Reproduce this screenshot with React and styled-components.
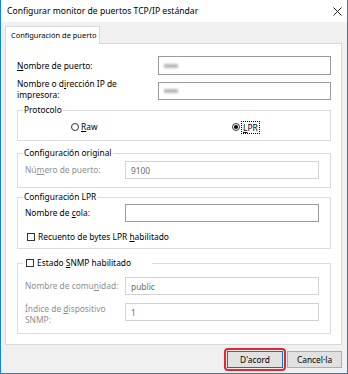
import React from 'react';
import styled, { createGlobalStyle } from 'styled-components';

const Global = createGlobalStyle`
  html, body { margin: 0; padding: 0; background: #fff; }
  body {
    font-family: "Noto Sans", "Liberation Sans", sans-serif;
    font-size: 8.4px;
    color: #000;
  }
  * { box-sizing: border-box; }
`;

const Window = styled.div`
  width: 348px;
  height: 374px;
  border: 1px solid #1883d7;
  border-top: none;
  display: flex;
  flex-direction: column;
  background: #f0f0f0;
`;

const TitleBar = styled.div`
  height: 22px;
  flex: none;
  background: #fff;
  display: flex;
  align-items: center;
  justify-content: space-between;
  padding: 0 5px 0 6px;
  font-size: 8.6px;
`;

const Body = styled.div`
  flex: 1;
  display: flex;
  flex-direction: column;
  padding: 4px 5px 0 4px;
`;

const TabStrip = styled.div`
  display: flex;
  height: 18px;
  margin-bottom: -1px;
  position: relative;
  z-index: 1;
`;

const Tab = styled.div`
  background: #fff;
  border: 1px solid #d9d9d9;
  border-bottom: none;
  padding: 0 3px 0 5px;
  line-height: 16px;
  width: 95px;
  font-size: 7.45px;
  white-space: nowrap;
`;

const Panel = styled.div`
  flex: 1;
  background: #fff;
  border: 1px solid #d9d9d9;
  padding: 12px 10px 0 11px;
  display: flex;
  flex-direction: column;
`;

const Row = styled.div`
  display: flex;
  align-items: ${p => p.$align || 'center'};
  margin-top: ${p => p.$mt || 0}px;
`;

const Label = styled.div`
  width: ${p => p.$w}px;
  flex: none;
  line-height: ${p => p.$lh || 12}px;
  color: ${p => (p.$disabled ? '#8f8f8f' : '#000')};
  white-space: pre-line;
`;

const Input = styled.div`
  flex: none;
  width: ${p => p.$w}px;
  height: ${p => p.$h || 18}px;
  border: 1px solid ${p => (p.$disabled ? '#d2d2d2' : '#9a9a9a')};
  background: #fff;
  display: flex;
  align-items: center;
  padding-left: 5px;
  color: #6d6d6d;
`;

const Blur = styled.span`
  display: inline-block;
  width: 14px;
  height: 4px;
  background: #b8b8b8;
  filter: blur(1px);
`;

const Group = styled.fieldset`
  margin: ${p => p.$mt}px 0 0 0;
  border: 1px solid #dcdcdc;
  padding: ${p => p.$pt}px 11px ${p => p.$pb}px 7px;
  min-width: 0;
`;

const Legend = styled.legend`
  padding: 0 1px;
  margin-left: -2px;
  line-height: 12px;
  width: ${p => (p.$w ? `${p.$w}px` : 'auto')};
  display: ${p => (p.$w ? 'flex' : 'block')};
  align-items: center;
`;

const RadioRow = styled.div`
  display: grid;
  grid-template-columns: 161px auto;
  padding-left: 46px;
  line-height: 12px;
`;

const Choice = styled.label`
  display: flex;
  align-items: center;
  gap: ${p => p.$gap ?? 2}px;
  line-height: 12px;
`;

const RadioCircle = styled.span`
  width: 8px;
  height: 8px;
  border-radius: 50%;
  border: 1px solid #333;
  background: #fff;
  display: flex;
  align-items: center;
  justify-content: center;
  &::after {
    content: '';
    display: ${p => (p.$checked ? 'block' : 'none')};
    width: 4px;
    height: 4px;
    border-radius: 50%;
    background: #000;
  }
`;

const Box = styled.span`
  width: 8px;
  height: 8px;
  flex: none;
  border: 1px solid #333;
  background: #fff;
  margin-left: 2px;
`;

const Focus = styled.span`
  outline: 1px dotted #000;
  outline-offset: 0;
  padding: 0 1px;
  line-height: 11px;
`;

const U = styled.span`
  text-decoration: underline;
  text-underline-offset: 1px;
`;

const Footer = styled.div`
  flex: none;
  height: 28px;
  display: flex;
  justify-content: flex-end;
  align-items: center;
  padding: 3px 0 2px;
  gap: 1px;
`;

const Highlight = styled.span`
  display: inline-flex;
  border: 2px solid #e5262b;
  border-radius: 4px;
  padding: 1px;
`;

const Button = styled.button`
  font: inherit;
  height: 17px;
  width: ${p => p.$w}px;
  padding: 0;
  background: #e1e1e1;
  border: 1px solid ${p => (p.$default ? '#0078d7' : '#adadad')};
  color: #000;
  display: flex;
  align-items: center;
  justify-content: center;
`;

const CloseIcon = () => (
  <svg width="9" height="9" viewBox="0 0 9 9">
    <path d="M0.5 0.5 L8.5 8.5 M8.5 0.5 L0.5 8.5" stroke="#222" strokeWidth="1" />
  </svg>
);

export default function App() {
  return (
    <>
      <Global />
      <Window>
        <TitleBar>
          <span>Configurar monitor de puertos TCP/IP estándar</span>
          <CloseIcon />
        </TitleBar>
        <Body>
          <TabStrip>
            <Tab>Configuración de puerto</Tab>
          </TabStrip>
          <Panel>
            <Row>
              <Label $w={141}><U>N</U>ombre de puerto:</Label>
              <Input $w={173} $h={19}><Blur /></Input>
            </Row>
            <Row $align="flex-end" $mt={3}>
              <Label $w={141} $lh={11}>Nombre o d<U>i</U>rección IP de{'\n'}impresora:</Label>
              <Input $w={173}><Blur /></Input>
            </Row>

            <Group $mt={4} $pt={5} $pb={7}>
              <Legend>Protocolo</Legend>
              <RadioRow>
                <Choice><RadioCircle /><span><U>R</U>aw</span></Choice>
                <Choice><RadioCircle $checked /><Focus><U>L</U>PR</Focus></Choice>
              </RadioRow>
            </Group>

            <Group $mt={6} $pt={2} $pb={8}>
              <Legend>Configuración original</Legend>
              <Row>
                <Label $w={100} $disabled>Nú<U>m</U>ero de puerto:</Label>
                <Input $w={194} $disabled>9100</Input>
              </Row>
            </Group>

            <Group $mt={3} $pt={1} $pb={5}>
              <Legend>Configuración LPR</Legend>
              <Row>
                <Label $w={100}>Nombre de <U>c</U>ola:</Label>
                <Input $w={194} />
              </Row>
              <Row $mt={9}>
                <Choice $gap={3}><Box /><span>Recuento de bytes LPR <U>h</U>abilitado</span></Choice>
              </Row>
            </Group>

            <Group $mt={8} $pt={8} $pb={8}>
              <Legend $w={129}>
                <Choice $gap={3}><Box /><span>Estado <U>S</U>NMP habilitado</span></Choice>
              </Legend>
              <Row>
                <Label $w={100} $disabled>Nombre de comu<U>n</U>idad:</Label>
                <Input $w={194} $disabled>public</Input>
              </Row>
              <Row $align="flex-start" $mt={8}>
                <Label $w={100} $lh={11} $disabled>Índice de <U>d</U>ispositivo{'\n'}SNMP:</Label>
                <Input $w={194} $disabled>1</Input>
              </Row>
            </Group>
          </Panel>
          <Footer>
            <Highlight>
              <Button $w={56} $default>D'acord</Button>
            </Highlight>
            <Button $w={55}>Cancel·la</Button>
          </Footer>
        </Body>
      </Window>
    </>
  );
}
